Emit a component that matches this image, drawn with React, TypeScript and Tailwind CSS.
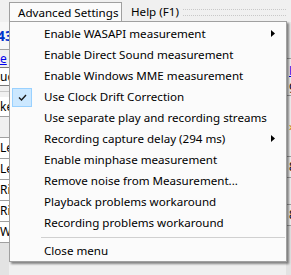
const items: { label: string; sub?: boolean; checked?: boolean }[] = [
  { label: "Enable WASAPI measurement", sub: true },
  { label: "Enable Direct Sound measurement" },
  { label: "Enable Windows MME measurement" },
  { label: "Use Clock Drift Correction", checked: true },
  { label: "Use separate play and recording streams" },
  { label: "Recording capture delay (294 ms)", sub: true },
  { label: "Enable minphase measurement" },
  { label: "Remove noise from Measurement..." },
  { label: "Playback problems workaround" },
  { label: "Recording problems workaround" },
];

function Arrow() {
  return (
    <svg width="4" height="7" viewBox="0 0 4 7" className="absolute left-[261px] top-[7px]">
      <path d="M0 0 L4 3.5 L0 7 Z" fill="#000" />
    </svg>
  );
}

function Check() {
  return (
    <div className="absolute left-[2px] top-[2px] flex h-[19px] w-[20px] items-center justify-center border border-[#99d1ff] bg-[#cce8ff]">
      <svg width="9" height="7" viewBox="0 0 9 7">
        <path d="M1 3.5 L3.5 6 L8 1" stroke="#1a1a1a" strokeWidth="1.4" fill="none" />
      </svg>
    </div>
  );
}

function LeftStrip() {
  const rows = ["Le", "Le", "Ri", "Ri", "Wo"];
  return (
    <div className="flex w-[9px] flex-col overflow-hidden whitespace-nowrap bg-[#f0f0f0] text-[12px] leading-none">
      <div className="flex h-[27px] items-center bg-[#f7f7f7] font-bold text-[14px] text-[#0033cc]">
        <span className="-ml-[3px]">43</span>
      </div>
      <div className="h-px bg-[#a0a0a0]" />
      <div className="flex h-[17px] items-center text-[#0000ee] underline">e</div>
      <div className="flex h-[19px] items-center border-y border-[#7a7a7a] bg-white">ud</div>
      <div className="h-[5px]" />
      <div className="h-px bg-[#c8c8c8]" />
      <div className="h-[5px]" />
      <div className="flex h-[19px] items-center bg-white">ke</div>
      <div className="h-px bg-[#a0a0a0]" />
      <div className="h-[20px]" />
      <div className="h-px bg-[#a0a0a0]" />
      {rows.map((r, i) => (
        <div key={i} className="flex h-[21px] items-center border-b border-[#a0a0a0] bg-white">
          {r}
        </div>
      ))}
      <div className="flex-1 bg-[#e3e3e3]" />
    </div>
  );
}

function RightStrip() {
  return (
    <div className="ml-auto flex w-[5px] flex-col overflow-hidden whitespace-nowrap bg-[#f0f0f0] text-[12px] leading-none">
      <div className="h-[36px] bg-[#e8e8e8]" />
      <div className="h-px bg-[#a0a0a0]" />
      <div className="flex h-[18px] items-end pl-[3px] text-[#0000ee] underline">H</div>
      <div className="flex h-[18px] items-center pl-[3px]">g</div>
      <div className="h-px bg-[#a0a0a0]" />
      <div className="h-[24px]" />
      <div className="flex h-[14px] items-center pl-[3px] text-[#d08000]">›</div>
      <div className="h-[22px]" />
      <div className="h-px bg-[#a0a0a0]" />
      <div className="flex h-[20px] items-center pl-[3px]">8</div>
      <div className="h-px bg-[#a0a0a0]" />
      <div className="h-[26px]" />
      <div className="h-px bg-[#a0a0a0]" />
      <div className="flex h-[20px] items-center pl-[3px]">8</div>
      <div className="h-px bg-[#a0a0a0]" />
      <div className="flex-1 bg-[#e3e3e3]" />
    </div>
  );
}

export default function App() {
  return (
    <div
      className="relative flex h-[275px] w-[291px] flex-col overflow-hidden bg-[#f0f0f0] text-[#000]"
      style={{ fontFamily: '"Noto Sans", "Open Sans", sans-serif' }}
    >
      {/* menubar */}
      <div className="flex h-[22px] shrink-0 items-end whitespace-nowrap text-[11.6px]">
        <div className="ml-[9px] flex h-[20px] w-[113px] items-center border border-b-0 border-[#a0a0a0] bg-[#fbfbfb] pl-[8px]">
          Advanced Settings
        </div>
        <div className="flex h-[20px] items-center pl-[9px]">Help (F1)</div>
        <div className="ml-[4px] flex h-[20px] flex-1 flex-col justify-center gap-[5px] pr-[5px]">
          <div className="border-t border-dotted border-[#c8c8c8]" />
          <div className="border-t border-dotted border-[#c8c8c8]" />
        </div>
      </div>

      {/* app content behind the menu */}
      <div className="flex flex-1">
        <LeftStrip />
        <RightStrip />
      </div>

      {/* dropdown */}
      <div className="absolute left-[9px] top-[21px] w-[278px] whitespace-nowrap border border-[#a0a0a0] bg-[#fbfbfb] pt-px text-[11.6px] shadow-[2px_2px_2px_rgba(0,0,0,0.45)]">
        {items.map((it) => (
          <div key={it.label} className="relative flex h-[21px] items-center pl-[34px]">
            {it.checked && <Check />}
            <span>{it.label}</span>
            {it.sub && <Arrow />}
          </div>
        ))}
        <div className="flex h-[8px] items-center pl-[31px] pr-px">
          <div className="h-px w-full bg-[#d0d0d0]" />
        </div>
        <div className="flex h-[20px] items-center pl-[34px]">Close menu</div>
      </div>
    </div>
  );
}
